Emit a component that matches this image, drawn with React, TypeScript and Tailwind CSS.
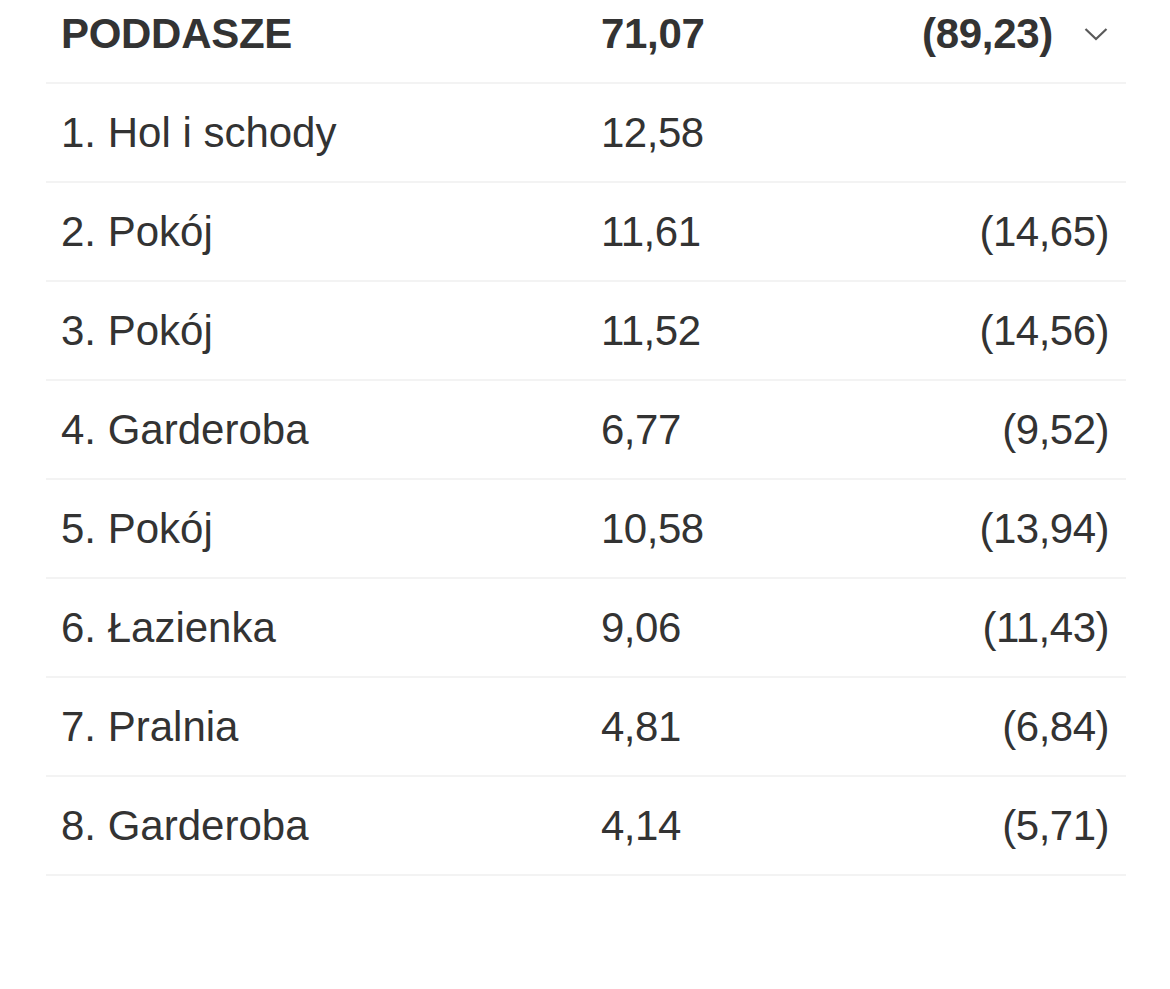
import React from 'react';

const rooms = [
  { name: '1. Hol i schody', area: '12,58', total: '' },
  { name: '2. Pokój', area: '11,61', total: '(14,65)' },
  { name: '3. Pokój', area: '11,52', total: '(14,56)' },
  { name: '4. Garderoba', area: '6,77', total: '(9,52)' },
  { name: '5. Pokój', area: '10,58', total: '(13,94)' },
  { name: '6. Łazienka', area: '9,06', total: '(11,43)' },
  { name: '7. Pralnia', area: '4,81', total: '(6,84)' },
  { name: '8. Garderoba', area: '4,14', total: '(5,71)' },
];

export default function App() {
  return (
    <div className="min-h-screen w-[1170px] bg-white text-[#333333] font-['Liberation_Sans',Arial,sans-serif] text-[42px] leading-none">
      <div className="mx-[46px] w-[1080px]">
        {/* floor header */}
        <div className="flex h-[84px] items-center border-b-2 border-[#f3f3f3] pb-[14px] pl-[15px] pr-[17px] font-bold tracking-[-0.3px]">
          <span className="w-[540px]">PODDASZE</span>
          <span className="flex-1">71,07</span>
          <span>(89,23)</span>
          <svg className="ml-[31px] mr-[1px] h-[14px] w-[24px]" viewBox="0 0 24 14" fill="none" stroke="#5a5a5a" strokeWidth="2.2">
            <path d="M1.5 2 L12 12 L22.5 2" />
          </svg>
        </div>

        {rooms.map((r) => (
          <div key={r.name} className="flex h-[99px] items-center border-b-2 border-[#f3f3f3] pl-[15px] pr-[17px]">
            <span className="w-[540px]">{r.name}</span>
            <span className="flex-1 tracking-[-0.5px]">{r.area}</span>
            <span className="tracking-[-0.5px]">{r.total}</span>
          </div>
        ))}
      </div>
    </div>
  );
}
